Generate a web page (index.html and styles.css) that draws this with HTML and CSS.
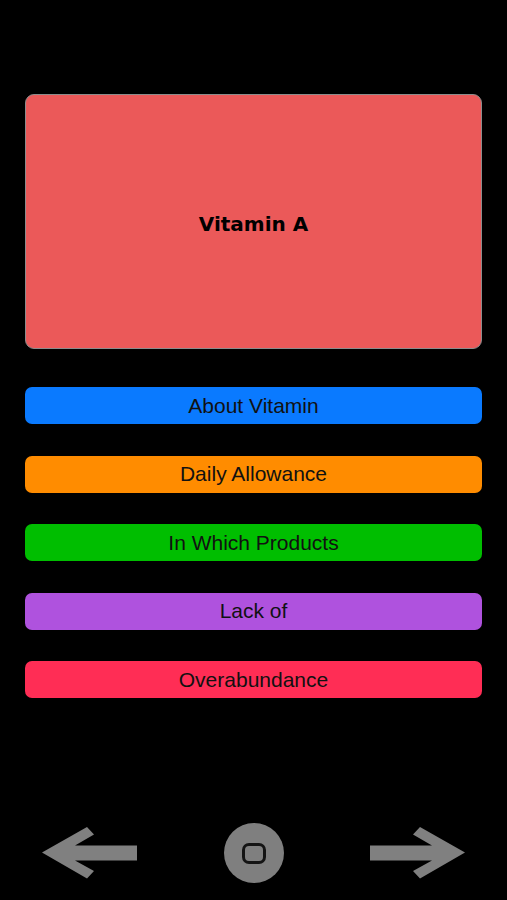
FILE: index.html
```html
<!DOCTYPE html>
<html lang="en">
<head>
    <meta charset="UTF-8">
    <meta name="viewport" content="width=device-width, initial-scale=1.0">
    <title>Vitamin A</title>
    <link rel="stylesheet" href="styles.css">
</head>
<body>
    <div class="screen">
        <!-- Картка вітаміну -->
        <div class="card">
            <span class="card-title">Vitamin A</span>
        </div>

        <!-- Меню -->
        <div class="menu">
            <button class="menu-btn blue">About Vitamin</button>
            <button class="menu-btn orange">Daily Allowance</button>
            <button class="menu-btn green">In Which Products</button>
            <button class="menu-btn purple">Lack of</button>
            <button class="menu-btn red">Overabundance</button>
        </div>

        <!-- Навігація -->
        <div class="nav">
            <svg class="arrow" width="95" height="52" viewBox="0 0 95 52">
                <polygon points="0,25.5 45,0 52,7.5 33,18.5 95,18.5 95,33.5 33,33.5 52,44 45,51.5" fill="#808080"/>
            </svg>
            <div class="home">
                <div class="home-inner"></div>
            </div>
            <svg class="arrow" width="95" height="52" viewBox="0 0 95 52">
                <polygon points="95,25.5 50,0 43,7.5 62,18.5 0,18.5 0,33.5 62,33.5 43,44 50,51.5" fill="#808080"/>
            </svg>
        </div>
    </div>
</body>
</html>
```

FILE: styles.css
```css
body {
    margin: 0;
    background-color: #000;
    font-family: "Liberation Sans", Arial, sans-serif;
}
.screen {
    height: 900px;
    box-sizing: border-box;
    padding: 94px 25px 17px;
    display: flex;
    flex-direction: column;
}
.card {
    height: 255px;
    box-sizing: border-box;
    background-color: #eb5959;
    border: 1px solid #8c8c8c;
    border-radius: 9px;
    display: flex;
    align-items: center;
    justify-content: center;
}
.card-title {
    font-family: "Comic Sans MS", "DejaVu Sans", sans-serif;
    font-weight: bold;
    font-size: 20px;
    color: #000;
    margin-top: 5px;
}
.menu {
    margin-top: 38px;
    display: flex;
    flex-direction: column;
    gap: 31.5px;
}
.menu-btn {
    height: 37px;
    border: none;
    border-radius: 7px;
    padding: 0;
    font-family: "Liberation Sans", Arial, sans-serif;
    font-size: 21px;
    color: #111;
}
.blue { background-color: #0a7aff; }
.orange { background-color: #ff8c00; }
.green { background-color: #00be00; }
.purple { background-color: #af52de; }
.red { background-color: #ff2d55; }
.nav {
    margin-top: auto;
    padding: 0 17px;
    display: flex;
    align-items: center;
    justify-content: space-between;
}
.arrow {
    display: block;
}
.home {
    width: 60px;
    height: 60px;
    border-radius: 50%;
    background-color: #7f7f7f;
    display: flex;
    align-items: center;
    justify-content: center;
}
.home-inner {
    width: 18px;
    height: 15px;
    border: 3px solid #141414;
    border-radius: 7px;
}
```
